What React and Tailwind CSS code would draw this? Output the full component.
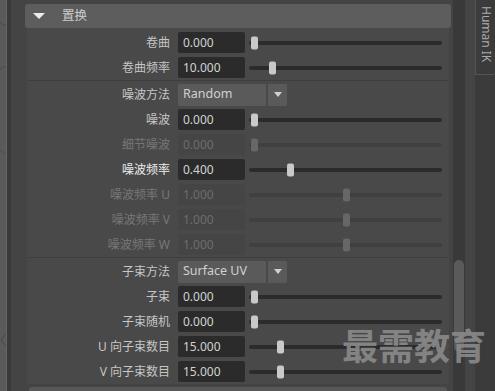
import React from 'react'

const FONT = { fontFamily: '"Noto Sans", "Noto Sans CJK SC", sans-serif' }

const Thumb = ({ left, disabled }) => (
  <div
    className={`absolute top-1/2 h-[13px] w-[7px] -translate-y-1/2 rounded-[2px] ${disabled ? 'bg-[#676767]' : 'bg-[#c9c9c9]'}`}
    style={{ left }}
  />
)

const Row = ({ label, value, pos = 2, disabled, hot }) => (
  <div className="flex h-[25px] shrink-0 items-center">
    <div
      className={`w-[143px] text-right text-[12px] leading-none ${disabled ? 'text-[#777]' : hot ? 'text-[#ececec]' : 'text-[#c6c6c6]'}`}
    >
      {label}
    </div>
    <div
      className={`ml-2 flex h-[21px] w-[67px] items-center rounded-[2px] pl-[5px] text-[12px] ${disabled ? 'bg-[#454545] text-[#6d6d6d]' : 'bg-[#2b2b2b] text-[#d2d2d2]'}`}
    >
      {value}
    </div>
    <div className={`relative ml-1 h-[4px] w-[193px] rounded-full ${disabled ? 'bg-[#404040]' : 'bg-[#2b2b2b]'}`}>
      <Thumb left={pos} disabled={disabled} />
    </div>
  </div>
)

const Select = ({ label, value }) => (
  <div className="flex h-[25px] shrink-0 items-center">
    <div className="w-[143px] text-right text-[12px] leading-none text-[#c6c6c6]">{label}</div>
    <div className="ml-2 flex h-[22px] items-stretch">
      <div className="flex w-[88px] items-center rounded-l-[2px] bg-[#5a5a5a] pl-[5px] text-[12.5px] text-[#d0d0d0]">{value}</div>
      <div className="ml-[2px] flex w-[19px] items-center justify-center rounded-r-[2px] bg-[#5a5a5a]">
        <div className="h-0 w-0 border-x-[4px] border-t-[5px] border-x-transparent border-t-[#d0d0d0]" />
      </div>
    </div>
  </div>
)

const Divider = () => <div className="mx-[1px] h-[2px] shrink-0 border-t border-[#3e3e3e]" />

export default function App() {
  return (
    <div className="relative flex h-[391px] w-[495px] overflow-hidden bg-[#444]" style={FONT}>
      {/* viewport edge */}
      <div className="w-[6px] shrink-0 bg-[#5a5a5a]">
        <svg width="6" height="391" className="block">
          <polyline points="0,22 3,26 6,24" fill="none" stroke="#4a4a4a" strokeWidth="1" />
          <polyline points="0,70 4,66 6,68" fill="none" stroke="#4a4a4a" strokeWidth="1" />
          <polyline points="0,150 5,154" fill="none" stroke="#4d4d4d" strokeWidth="1" />
          <polyline points="6,333 1,340 6,346" fill="none" stroke="#4a4a4a" strokeWidth="1" />
        </svg>
      </div>
      <div className="w-px shrink-0 bg-[#666]" />
      <div className="w-[4px] shrink-0 bg-[#393939]" />

      {/* attribute panel */}
      <div className="flex w-[442px] shrink-0 flex-col pl-[14px] pr-[2px] pt-[4px]">
        <div className="flex h-[24px] shrink-0 items-center rounded-[3px] bg-[#5d5d5d]">
          <div className="ml-[8px] h-0 w-0 border-x-[6px] border-t-[6px] border-x-transparent border-t-[#ececec]" />
          <span className="ml-[17px] text-[12.5px] text-[#cdcdcd]">置换</span>
        </div>
        <div className="mx-[2px] flex shrink-0 flex-col bg-[#494949] pt-[2px]">
          <Row label="卷曲" value="0.000" />
          <Row label="卷曲频率" value="10.000" pos={20} />
          <Divider />
          <Select label="噪波方法" value="Random" />
          <Row label="噪波" value="0.000" />
          <Row label="细节噪波" value="0.000" disabled />
          <Row label="噪波频率" value="0.400" pos={38} hot />
          <Row label="噪波频率 U" value="1.000" pos={94} disabled />
          <Row label="噪波频率 V" value="1.000" pos={94} disabled />
          <Row label="噪波频率 W" value="1.000" pos={94} disabled />
          <Divider />
          <Select label="子束方法" value="Surface UV" />
          <Row label="子束" value="0.000" />
          <Row label="子束随机" value="0.000" />
          <Row label="U 向子束数目" value="15.000" pos={28} />
          <Row label="V 向子束数目" value="15.000" pos={28} />
        </div>
        <div className="mx-[4px] mt-[3px] h-[20px] shrink-0 rounded-t-[3px] bg-[#575757]" />
      </div>

      {/* scrollbar */}
      <div className="w-[12px] shrink-0 bg-[#393939] pl-px pt-[260px]">
        <div className="h-[92px] w-[10px] rounded-full bg-[#5a5a5a]" />
      </div>
      <div className="w-[10px] shrink-0 bg-[#444]" />

      {/* side tab */}
      <div className="w-[20px] shrink-0 bg-[#3b3b3b]">
        <div className="flex h-[75px] justify-center rounded-br-[3px] border-b border-l border-[#555] pt-[6px]">
          <span className="text-[12px] leading-none text-[#aaa]" style={{ writingMode: 'vertical-rl' }}>
            Human IK
          </span>
        </div>
      </div>

      {/* watermark */}
      <div className="pointer-events-none absolute left-[342px] top-[329px] text-[36px] font-bold leading-none text-[#8c8c8c]/90">
        最需教育
      </div>
    </div>
  )
}
